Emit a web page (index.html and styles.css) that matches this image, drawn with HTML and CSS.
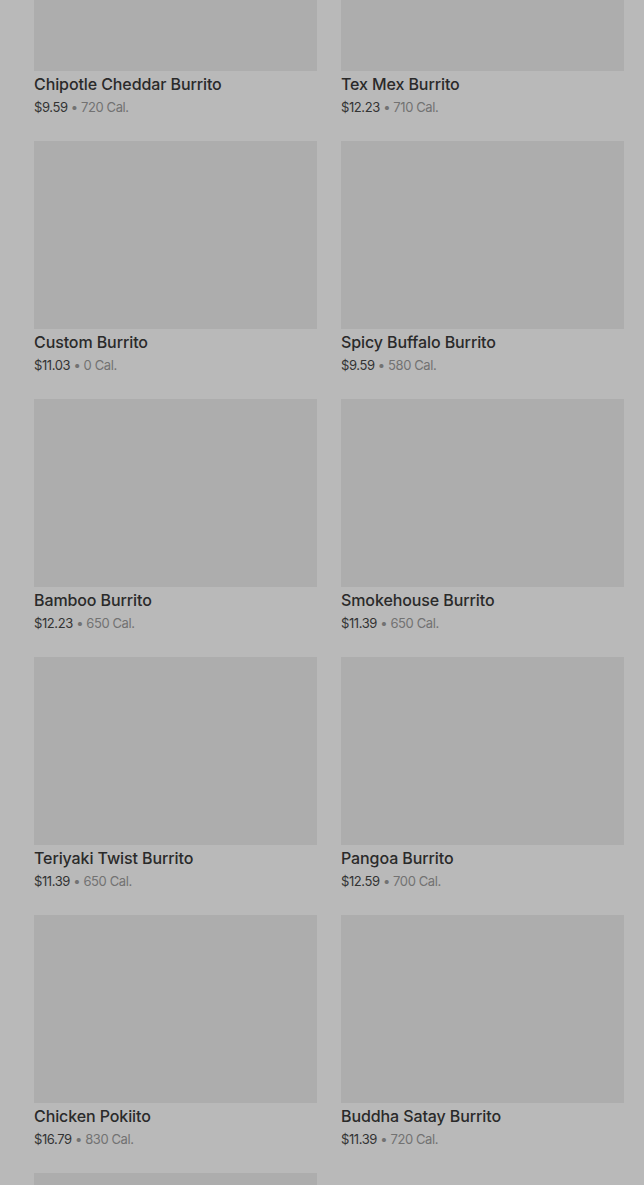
FILE: index.html
```html
<!DOCTYPE html>
<html>
<head>
	<meta charset="UTF-8">
	<title>Burritos</title>
	<link rel="stylesheet" href="styles.css">
</head>
<body>
	<section class="menu_list">
		<div class="item">
			<div class="item_photo"></div>
			<div class="item_name">Chipotle Cheddar Burrito</div>
			<div class="item_info"><span class="price">$9.59</span> • 720 Cal.</div>
		</div>
		<div class="item">
			<div class="item_photo"></div>
			<div class="item_name">Tex Mex Burrito</div>
			<div class="item_info"><span class="price">$12.23</span> • 710 Cal.</div>
		</div>
		<div class="item">
			<div class="item_photo"></div>
			<div class="item_name">Custom Burrito</div>
			<div class="item_info"><span class="price">$11.03</span> • 0 Cal.</div>
		</div>
		<div class="item">
			<div class="item_photo"></div>
			<div class="item_name">Spicy Buffalo Burrito</div>
			<div class="item_info"><span class="price">$9.59</span> • 580 Cal.</div>
		</div>
		<div class="item">
			<div class="item_photo"></div>
			<div class="item_name">Bamboo Burrito</div>
			<div class="item_info"><span class="price">$12.23</span> • 650 Cal.</div>
		</div>
		<div class="item">
			<div class="item_photo"></div>
			<div class="item_name">Smokehouse Burrito</div>
			<div class="item_info"><span class="price">$11.39</span> • 650 Cal.</div>
		</div>
		<div class="item">
			<div class="item_photo"></div>
			<div class="item_name">Teriyaki Twist Burrito</div>
			<div class="item_info"><span class="price">$11.39</span> • 650 Cal.</div>
		</div>
		<div class="item">
			<div class="item_photo"></div>
			<div class="item_name">Pangoa Burrito</div>
			<div class="item_info"><span class="price">$12.59</span> • 700 Cal.</div>
		</div>
		<div class="item">
			<div class="item_photo"></div>
			<div class="item_name">Chicken Pokiito</div>
			<div class="item_info"><span class="price">$16.79</span> • 830 Cal.</div>
		</div>
		<div class="item">
			<div class="item_photo"></div>
			<div class="item_name">Buddha Satay Burrito</div>
			<div class="item_info"><span class="price">$11.39</span> • 720 Cal.</div>
		</div>
		<div class="item">
			<div class="item_photo"></div>
		</div>
	</section>
</body>
</html>
```

FILE: styles.css
```css
html, body {
	margin: 0;
	background: #b9b9b9;
	overflow: hidden;
}
body {
	font-family: Inter, "Noto Sans", sans-serif;
	color: #2b2b2b;
}
/* list is shown scrolled, first row partly above the fold */
.menu_list {
	display: grid;
	grid-template-columns: 283px 283px;
	column-gap: 24px;
	row-gap: 24px;
	padding: 0 20px 0 34px;
	margin-top: -117px;
}
.item {
	height: 234px;
}
.item_photo {
	height: 188px;
	background: #adadad;
}
.item_name {
	margin-top: 3px;
	font-size: 16px;
	line-height: 20px;
	font-weight: 500;
	color: #2a2a2a;
	letter-spacing: -0.1px;
}
.item_info {
	margin-top: 3px;
	font-size: 13px;
	line-height: 20px;
	color: #727272;
	letter-spacing: -0.4px;
}
.price {
	color: #333;
}
```
